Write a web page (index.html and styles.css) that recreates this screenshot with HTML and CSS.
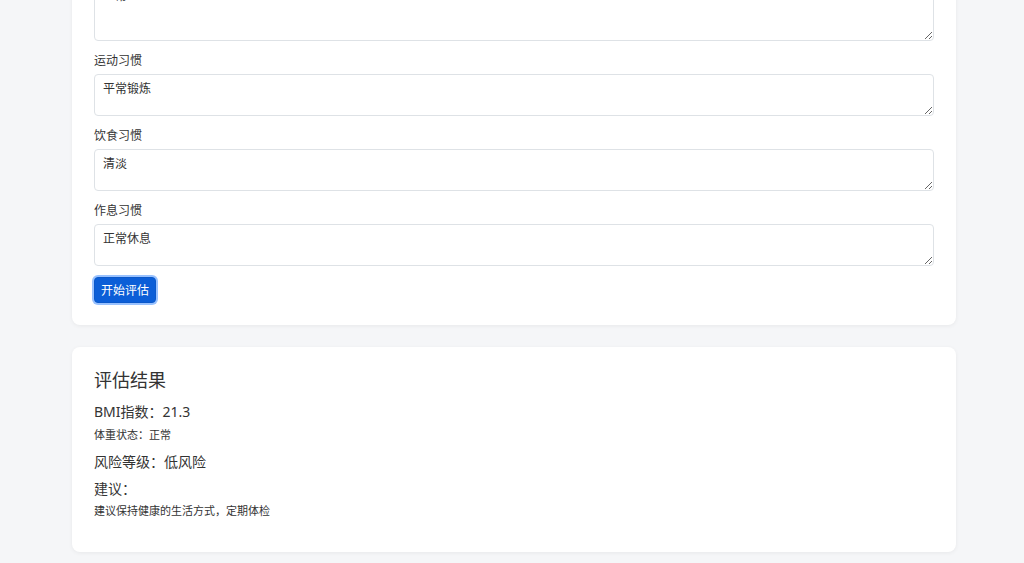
FILE: index.html
```html
<!DOCTYPE html>
<html lang="zh-CN">
<head>
  <meta charset="UTF-8">
  <title>健康评估</title>
  <link rel="stylesheet" href="styles.css">
</head>
<body>
  <div class="page">
    <div class="card form-card">
      <div class="field">
        <label class="field-label">既往病史</label>
        <textarea class="field-input tall">正常</textarea>
      </div>
      <div class="field">
        <label class="field-label">运动习惯</label>
        <textarea class="field-input">平常锻炼</textarea>
      </div>
      <div class="field">
        <label class="field-label">饮食习惯</label>
        <textarea class="field-input">清淡</textarea>
      </div>
      <div class="field">
        <label class="field-label">作息习惯</label>
        <textarea class="field-input">正常休息</textarea>
      </div>
      <button class="btn-submit">开始评估</button>
    </div>

    <div class="card result-card">
      <h2 class="result-title">评估结果</h2>
      <p class="result-main">BMI指数：21.3</p>
      <p class="result-sub">体重状态：正常</p>
      <p class="result-main risk">风险等级：低风险</p>
      <p class="result-main advice">建议：</p>
      <p class="result-sub advice-text">建议保持健康的生活方式，定期体检</p>
    </div>
  </div>
</body>
</html>
```

FILE: styles.css
```css
* {
  box-sizing: border-box;
}

body {
  margin: 0;
  padding-left: 4px;
  background: #f5f6f8;
  color: #212529;
  font-family: "Segoe UI", "Noto Sans", "Noto Sans CJK SC", sans-serif;
}

.page {
  width: 884px;
  margin: 0 auto;
  padding-bottom: 40px;
}

.card {
  background: #fff;
  border-radius: 8px;
  box-shadow: 0 1px 4px rgba(0, 0, 0, 0.06);
  padding: 22px;
}

.form-card {
  margin-top: -62px;
}

.field {
  margin-bottom: 12px;
}

.field-label {
  display: block;
  font-size: 12px;
  line-height: 16px;
  margin-bottom: 5px;
  color: #333;
}

.field-input {
  display: block;
  width: 100%;
  height: 42px;
  padding: 5px 8px;
  font-family: inherit;
  font-size: 12px;
  line-height: 18px;
  color: #333;
  border: 1px solid #dee2e6;
  border-radius: 4px;
  resize: vertical;
}

.field-input.tall {
  height: 60px;
}

.btn-submit {
  display: block;
  margin-top: -1px;
  width: 62px;
  height: 26px;
  padding: 0;
  font-family: inherit;
  font-size: 12px;
  color: #fff;
  background: #0b5ed7;
  border: 1px solid #0a58ca;
  border-radius: 4px;
  box-shadow: 0 0 0 2px rgba(49, 132, 253, 0.5);
}

.result-card {
  margin-top: 22px;
  padding-bottom: 33px;
}

.result-title {
  margin: 0 0 11px;
  font-size: 18px;
  line-height: 22px;
  font-weight: 400;
  color: #333;
}

.result-main {
  margin: 0;
  font-size: 14px;
  line-height: 20px;
  color: #333;
}

.result-sub {
  margin: 5px 0 0;
  font-size: 11px;
  line-height: 16px;
  color: #333;
}

.risk {
  margin-top: 9px;
}

.advice {
  margin-top: 7px;
}

.advice-text {
  margin-top: 4px;
}
```
